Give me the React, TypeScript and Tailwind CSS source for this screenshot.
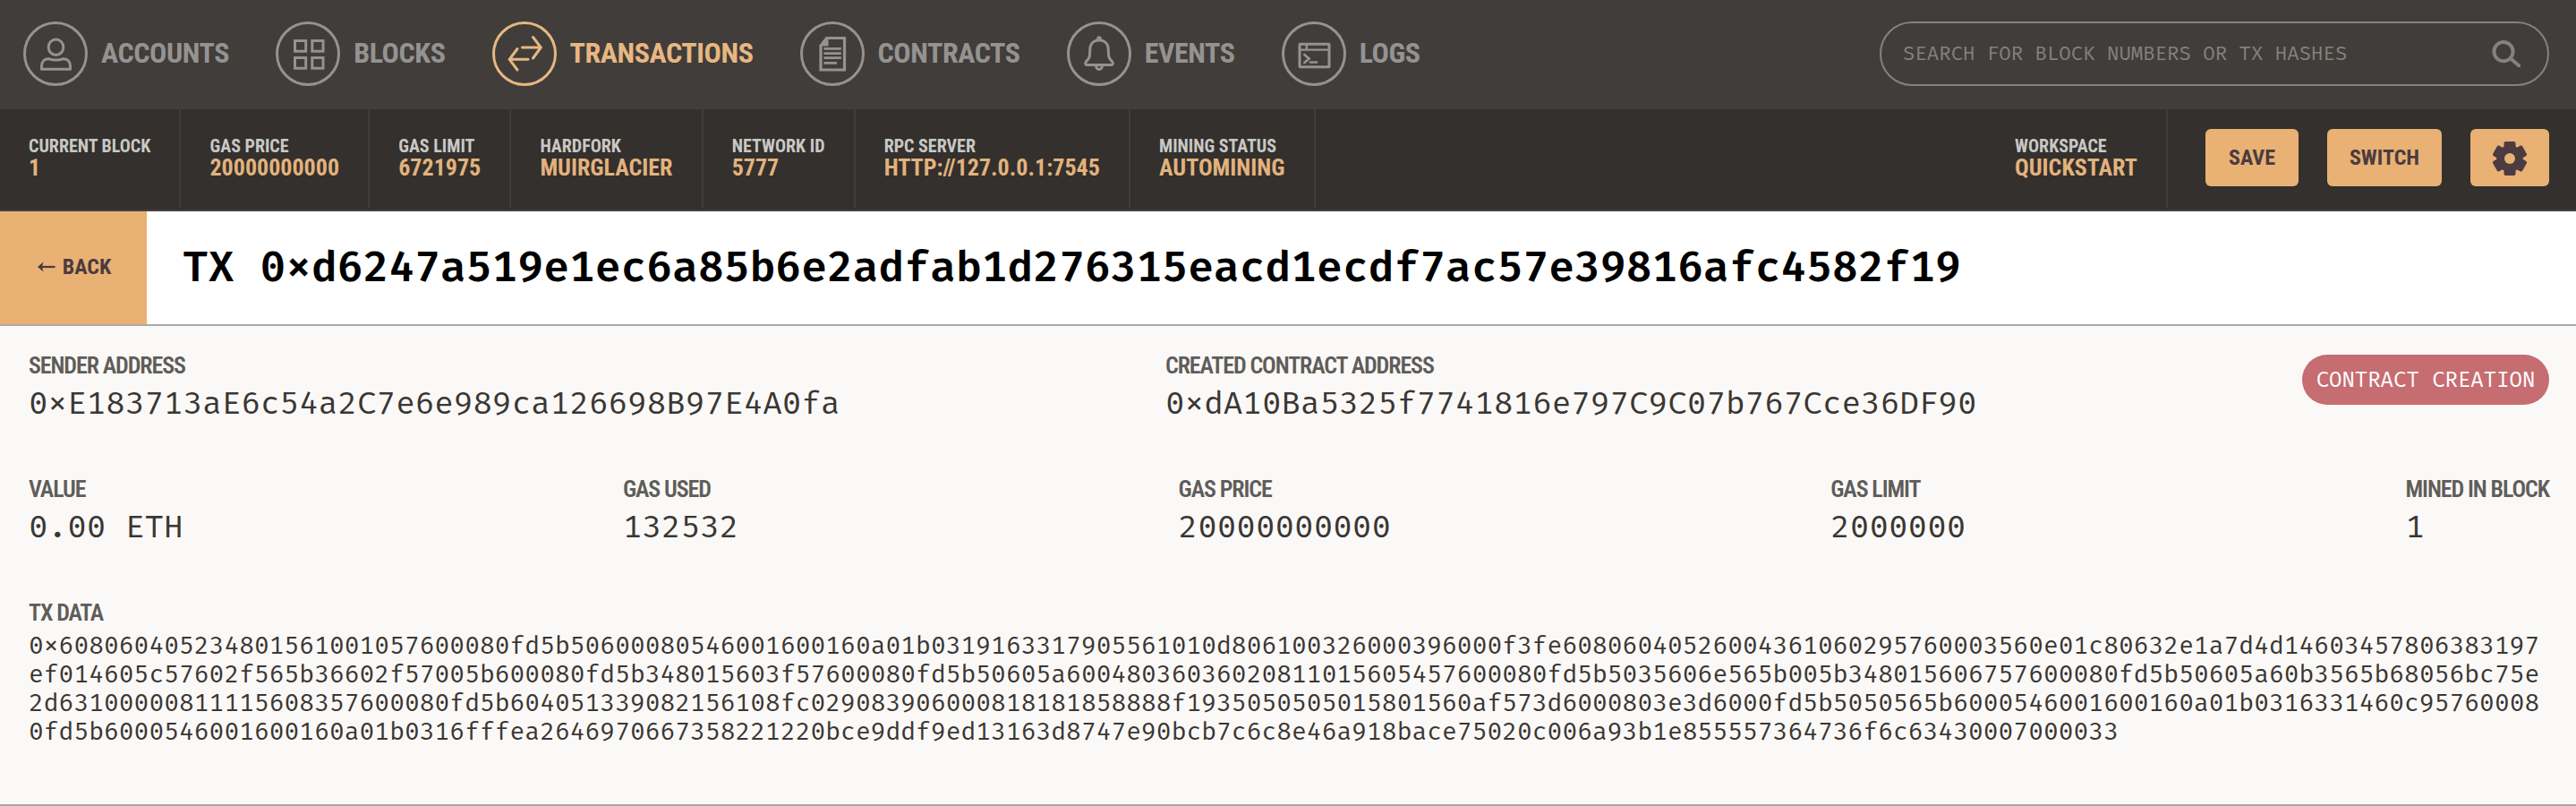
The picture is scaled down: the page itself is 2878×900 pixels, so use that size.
import type { ReactNode } from "react";

const MONO = "font-['Fira_Code','Liberation_Mono',monospace] [font-feature-settings:'zero']";

const stroke = { fill: "none", stroke: "currentColor", strokeWidth: 3 } as const;

function AccountsIcon() {
  return (
    <g {...stroke}>
      <ellipse cx="36.5" cy="28.7" rx="8.3" ry="8.7" />
      <path d="M20.5 53.3V50c0-5.5 3.2-8.5 8-8.2 5 1.6 11 1.6 16 0 4.8-.3 8 2.7 8 8.2v3.3z" strokeLinejoin="round" />
    </g>
  );
}

function BlocksIcon() {
  return (
    <g {...stroke}>
      <rect x="21.5" y="21.5" width="12.2" height="11.7" />
      <rect x="40.8" y="21.5" width="12.2" height="11.7" />
      <rect x="21.5" y="40.5" width="12.2" height="11.7" />
      <rect x="40.8" y="40.5" width="12.2" height="11.7" />
    </g>
  );
}

function TransactionsIcon() {
  return (
    <g {...stroke} strokeLinecap="round">
      <path d="M33.5 29H54M45.5 17.5L54.3 29L45.5 41" />
      <path d="M40 42.3H19.5M28 30.5L19.2 42.3L28 54" />
    </g>
  );
}

function ContractsIcon() {
  return (
    <g>
      <path d="M29.5 18.5H49.5V54H23V27z" fill="none" stroke="currentColor" strokeWidth="3.2" />
      <path d="M29 17.5L31.5 18V27.5H22z" fill="currentColor" />
      <path d="M26.5 30.4H45.8M26.5 35.6H45.8M26.5 40.7H45.8M26.5 46.3H41" fill="none" stroke="currentColor" strokeWidth="2.7" />
    </g>
  );
}

function EventsIcon() {
  return (
    <g {...stroke} strokeLinejoin="round">
      <circle cx="36" cy="19" r="1.3" />
      <path d="M36 20.8C29.5 21 25.7 25.5 25.7 32C25.7 40 24.8 41.5 21.5 44.7C19.6 46.9 21 48.5 23 48.5H49C51 48.5 52.4 46.9 50.5 44.7C47.2 41.5 46.3 40 46.3 32C46.3 25.5 42.5 21 36 20.8z" />
      <path d="M32.7 49v1.2a3.3 3.3 0 0 0 6.6 0V49" />
    </g>
  );
}

function LogsIcon() {
  return (
    <g {...stroke}>
      <rect x="20" y="25.2" width="33" height="25.6" rx="0.5" />
      <path d="M20 31.6H53M27.8 25V31" strokeWidth="2.4" />
      <path d="M25.3 37L30.5 41.5L25.3 46M32 45.5H39" strokeWidth="2.7" strokeLinecap="round" />
    </g>
  );
}

function GearIcon() {
  return (
    <svg viewBox="-20 -20 40 40" className="mt-[2px] h-10 w-10 text-[#4c3b40]">
      <g fill="currentColor">
        {[0, 60, 120].map((angle) => (
          <rect key={angle} x="-6.5" y="-19" width="13" height="38" rx="2" transform={`rotate(${angle})`} />
        ))}
        <circle r="14.8" />
      </g>
      <circle r="6" fill="#e9b174" />
    </svg>
  );
}

function NavItem({ label, icon, active = false }: { label: string; icon: ReactNode; active?: boolean }) {
  return (
    <a className={`flex items-center gap-[15px] ${active ? "text-[#e7b782]" : "text-[#949392]"}`}>
      <svg viewBox="0 0 72 72" className="h-[72px] w-[72px]">
        <circle cx="36" cy="36" r="34.5" {...stroke} />
        {icon}
      </svg>
      <span className="pb-[2px] text-[32px] leading-none font-bold tracking-[-0.4px]">{label}</span>
    </a>
  );
}

function Status({ label, value }: { label: string; value: string }) {
  return (
    <div className="flex h-[110px] flex-col justify-center border-r-2 border-[#413d3b] pr-[32.2px] pb-[4px] pl-8">
      <span className="text-[20px] leading-6 font-bold text-[#c9c8c5]">{label}</span>
      <span className="text-[26px] leading-6 font-bold text-[#e3b27c]">{value}</span>
    </div>
  );
}

function Field({ label, value }: { label: string; value: string }) {
  return (
    <div className="flex flex-col">
      <span className="text-[26px] leading-[34px] font-semibold tracking-[-1.1px] text-[#5f5d5a]">{label}</span>
      <span className={`${MONO} mt-[3px] text-[35.1px] leading-[48px] text-[#3a3734]`}>{value}</span>
    </div>
  );
}

const TX_DATA =
  "0x608060405234801561001057600080fd5b50600080546001600160a01b0319163317905561010d806100326000396000f3fe60806040526004361060295760003560e01c80632e1a7d4d14603457806383197" +
  "ef014605c57602f565b36602f57005b600080fd5b348015603f57600080fd5b50605a60048036036020811015605457600080fd5b5035606e565b005b348015606757600080fd5b50605a60b3565b68056bc75e" +
  "2d63100000811115608357600080fd5b604051339082156108fc029083906000818181858888f1935050505015801560af573d6000803e3d6000fd5b5050565b6000546001600160a01b0316331460c95760008" +
  "0fd5b6000546001600160a01b0316fffea2646970667358221220bce9ddf9ed13163d8747e90bcb7c6c8e46a918bace75020c006a93b1e855557364736f6c63430007000033";

export default function App() {
  return (
    <div className="flex h-[900px] w-[2878px] flex-col overflow-hidden bg-[#fbf9f7] font-['Roboto_Condensed','Roboto',sans-serif]">
      <header className="flex h-[122px] shrink-0 items-center justify-between bg-[#413d3a] pr-[30px] pb-[2px] pl-[26px]">
        <nav className="flex items-center gap-[52px]">
          <NavItem label="ACCOUNTS" icon={<AccountsIcon />} />
          <NavItem label="BLOCKS" icon={<BlocksIcon />} />
          <NavItem label="TRANSACTIONS" icon={<TransactionsIcon />} active />
          <NavItem label="CONTRACTS" icon={<ContractsIcon />} />
          <NavItem label="EVENTS" icon={<EventsIcon />} />
          <NavItem label="LOGS" icon={<LogsIcon />} />
        </nav>
        <div className="flex h-[72px] w-[748px] items-center justify-between rounded-full border-2 border-[#848281] pr-[30px] pl-6">
          <span className={`${MONO} pt-[2px] text-[21.8px] text-[#83817f]`}>SEARCH FOR BLOCK NUMBERS OR TX HASHES</span>
          <svg viewBox="0 0 34 34" className="h-[34px] w-[34px] text-[#848281]">
            <circle cx="15" cy="14.6" r="10.6" fill="none" stroke="currentColor" strokeWidth="4" />
            <path d="M23 22.5L32.2 30.2" fill="none" stroke="currentColor" strokeWidth="4" strokeLinecap="round" />
          </svg>
        </div>
      </header>

      <section className="flex h-[114px] shrink-0 items-start justify-between border-b-2 border-[#463f40] bg-[#33302d]">
        <div className="flex">
          <Status label="CURRENT BLOCK" value="1" />
          <Status label="GAS PRICE" value="20000000000" />
          <Status label="GAS LIMIT" value="6721975" />
          <Status label="HARDFORK" value="MUIRGLACIER" />
          <Status label="NETWORK ID" value="5777" />
          <Status label="RPC SERVER" value="HTTP://127.0.0.1:7545" />
          <Status label="MINING STATUS" value="AUTOMINING" />
        </div>
        <div className="flex items-start pr-[30px]">
          <Status label="WORKSPACE" value="QUICKSTART" />
          <div className="flex gap-8 pt-[22px] pl-[42px] text-[24px] font-bold text-[#4c3b40]">
            <button className="h-16 w-[104px] rounded-md bg-[#e9b174]">SAVE</button>
            <button className="h-16 w-[128px] rounded-md bg-[#e9b174]">SWITCH</button>
            <button className="flex h-16 w-[88px] items-center justify-center rounded-md bg-[#e9b174]">
              <GearIcon />
            </button>
          </div>
        </div>
      </section>

      <section className="flex h-[128px] shrink-0 border-b-2 border-[#aaa9a7] bg-white">
        <button className="flex w-[164px] items-center justify-center gap-[8px] bg-[#e9b174] pb-[2px] pl-[2px] text-[24px] font-bold text-[#4c3b40]">
          <svg viewBox="0 0 20 14" className="h-[14px] w-5">
            <path d="M3 7H19.5" stroke="currentColor" strokeWidth="2.2" />
            <path d="M0 7L6.5 1.5L5 7L6.5 12.5z" fill="currentColor" />
          </svg>
          BACK
        </button>
        <h1 className={`${MONO} flex items-center pt-[3px] pl-10 text-[46.8px] font-[570] text-black`}>
          TX 0xd6247a519e1ec6a85b6e2adfab1d276315eacd1ecdf7ac57e39816afc4582f19
        </h1>
      </section>

      <main className="flex grow flex-col border-b-2 border-[#aaa9a7] pr-[30px] pl-8">
        <div className="mt-[27px] flex h-[138px] items-start justify-between">
          <Field label="SENDER ADDRESS" value="0xE183713aE6c54a2C7e6e989ca126698B97E4A0fa" />
          <Field label="CREATED CONTRACT ADDRESS" value="0xdA10Ba5325f7741816e797C9C07b767Cce36DF90" />
          <span className={`${MONO} mt-[5px] flex h-14 w-[276px] items-center justify-center rounded-full bg-[#c66d72] pt-[1px] text-[23.4px] text-white`}>
            CONTRACT CREATION
          </span>
        </div>
        <div className="flex h-[138px] items-start justify-between">
          <Field label="VALUE" value="0.00 ETH" />
          <Field label="GAS USED" value="132532" />
          <Field label="GAS PRICE" value="20000000000" />
          <Field label="GAS LIMIT" value="2000000" />
          <Field label="MINED IN BLOCK" value="1" />
        </div>
        <div className="flex flex-col">
          <span className="text-[26px] leading-[34px] font-semibold tracking-[-1.1px] text-[#5f5d5a]">TX DATA</span>
          <p className={`${MONO} mt-[5px] text-[27.3px] leading-8 break-all text-[#3a3734]`}>{TX_DATA}</p>
        </div>
      </main>
    </div>
  );
}
